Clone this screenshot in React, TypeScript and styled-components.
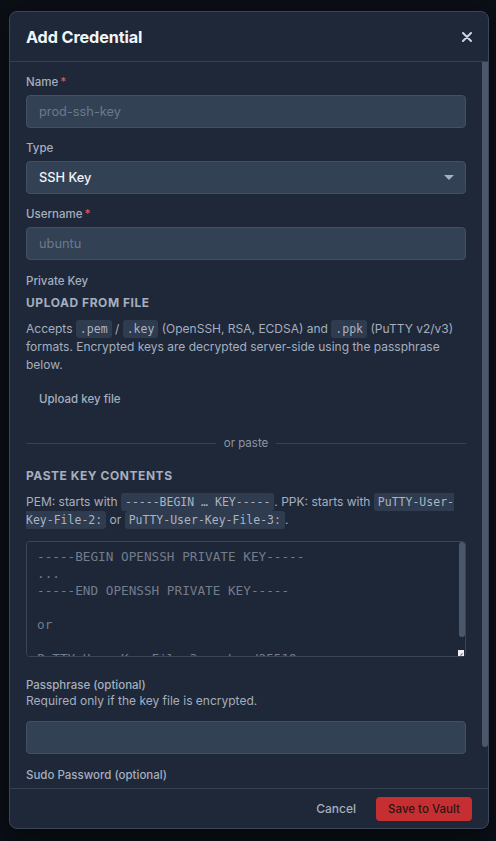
import React from "react";
import styled, { createGlobalStyle } from "styled-components";

const GlobalStyle = createGlobalStyle`
  html, body { margin: 0; padding: 0; height: 100%; }
  body {
    background: #0b0f16;
    font-family: Inter, "Noto Sans", "Liberation Sans", sans-serif;
    -webkit-font-smoothing: antialiased;
  }
  * { box-sizing: border-box; }
`;

const Overlay = styled.div`
  position: fixed;
  inset: 0;
  display: flex;
  padding: 11px 7px 12px 9px;
  background: #0b0f16;
`;

const Dialog = styled.div`
  flex: 1;
  display: flex;
  flex-direction: column;
  min-height: 0;
  background: #1f2839;
  border: 1px solid #3b4658;
  border-radius: 8px;
  overflow: hidden;
  box-shadow: 0 10px 30px rgba(0, 0, 0, 0.5);
`;

const Header = styled.div`
  height: 50px;
  flex: none;
  display: flex;
  align-items: center;
  justify-content: space-between;
  padding: 0 16px 0 16px;
  border-bottom: 1px solid #334155;
`;

const Title = styled.h2`
  margin: 0;
  font-size: 16.2px;
  font-weight: 700;
  color: #f1f5f9;
  letter-spacing: -0.1px;
`;

const CloseButton = styled.button`
  background: none;
  border: none;
  padding: 0;
  width: 18px;
  height: 18px;
  display: flex;
  align-items: center;
  justify-content: center;
  color: #cbd5e0;
  cursor: pointer;
  margin-right: -4px;
`;

const BodyWrap = styled.div`
  position: relative;
  flex: 1;
  min-height: 0;
  display: flex;
`;

const Body = styled.div`
  flex: 1;
  min-height: 0;
  overflow-y: auto;
  padding: 11px 22px 12px 16px;
  display: flex;
  flex-direction: column;
  scrollbar-width: none;
  &::-webkit-scrollbar { display: none; }
  & > * { flex-shrink: 0; }
`;

const ScrollThumb = styled.div<{ $h: number }>`
  position: absolute;
  top: 0;
  right: 0;
  width: 6px;
  height: ${(p) => p.$h}px;
  background: #4b586b;
  border-radius: 0 0 3px 3px;
`;

const Field = styled.div<{ $gap?: number }>`
  display: flex;
  flex-direction: column;
  margin-bottom: ${(p) => p.$gap ?? 11}px;
`;

const Label = styled.label<{ $tight?: boolean; $top?: number }>`
  font-size: 11.5px;
  line-height: 18px;
  font-weight: 500;
  color: #a5afbf;
  margin-top: ${(p) => p.$top ?? 0}px;
  margin-bottom: ${(p) => (p.$tight ? 0 : 4)}px;
`;

const Req = styled.span`
  color: #e05555;
  margin-left: 2px;
`;

const TextInput = styled.input`
  height: 33px;
  width: 100%;
  background: #334155;
  border: 1px solid #415066;
  border-radius: 4px;
  padding: 0 12px;
  font-family: inherit;
  font-size: 12.8px;
  color: #e2e8f0;
  outline: none;
  &::placeholder { color: #6d798b; }
`;

const SelectButton = styled.button`
  height: 33px;
  width: 100%;
  display: flex;
  align-items: center;
  justify-content: space-between;
  background: #334155;
  border: 1px solid #415066;
  border-radius: 4px;
  padding: 0 11px 0 12px;
  font-family: inherit;
  font-size: 12.8px;
  font-weight: 500;
  color: #f1f5f9;
  cursor: pointer;
`;

const SectionTitle = styled.h3<{ $top: number }>`
  margin: ${(p) => p.$top}px 0 9px 0;
  font-size: 12px;
  line-height: 16px;
  font-weight: 700;
  letter-spacing: 0.55px;
  text-transform: uppercase;
  color: #a5afbf;
`;

const Para = styled.p`
  margin: 0;
  font-size: 12px;
  line-height: 18px;
  color: #a5afbf;
`;

const Code = styled.code`
  font-family: "DejaVu Sans Mono", "Liberation Mono", monospace;
  font-size: 11.5px;
  background: #2f3b4e;
  color: #aab4c3;
  padding: 2px 4px;
  border-radius: 3px;
`;

const UploadButton = styled.button`
  align-self: flex-start;
  height: 32px;
  margin-top: 9px;
  padding: 0 13px;
  background: transparent;
  border: none;
  font-family: inherit;
  font-size: 11.5px;
  font-weight: 500;
  color: #a5afbf;
  cursor: pointer;
`;

const Divider = styled.div`
  margin-top: 19px;
  height: 18px;
  display: flex;
  align-items: center;
  gap: 8px;
  font-size: 11.5px;
  color: #8b96a7;
  &::before, &::after {
    content: "";
    flex: 1;
    height: 1px;
    background: #364255;
  }
`;

const KeyBox = styled.div`
  position: relative;
  margin-top: 12px;
  margin-bottom: 19px;
`;

const KeyArea = styled.textarea`
  display: block;
  height: 116px;
  width: 100%;
  resize: none;
  background: #1e2738;
  border: 1px solid #3a4658;
  border-radius: 4px;
  padding: 6px 16px 6px 10px;
  font-family: "DejaVu Sans Mono", "Liberation Mono", monospace;
  font-size: 12.7px;
  line-height: 17px;
  color: #737c8c;
  outline: none;
  overflow-y: auto;
  scrollbar-width: none;
  &::-webkit-scrollbar { display: none; }
`;

const AreaThumb = styled.div`
  position: absolute;
  top: 1px;
  right: 1px;
  width: 6px;
  height: 95px;
  background: #4b586b;
  border-radius: 3px;
`;

const Resizer = styled.div`
  position: absolute;
  right: 2px;
  bottom: 1px;
  width: 6px;
  height: 6px;
  background: #eef0f3;
  &::after {
    content: "";
    position: absolute;
    right: 1px;
    bottom: 1px;
    width: 3px;
    height: 1px;
    background: #6b7280;
    transform: rotate(-45deg);
  }
`;

const Hint = styled.p`
  margin: -2px 0 11px 0;
  font-size: 12px;
  line-height: 18px;
  color: #a5afbf;
`;

const Footer = styled.div`
  flex: none;
  height: 40px;
  border-top: 1px solid #334155;
  display: flex;
  align-items: center;
  justify-content: flex-end;
  gap: 9px;
  padding: 0 16px;
`;

const GhostButton = styled.button`
  height: 24px;
  padding: 0 11px;
  background: transparent;
  border: none;
  font-family: inherit;
  font-size: 12px;
  font-weight: 500;
  color: #a5afbf;
  cursor: pointer;
`;

const DangerButton = styled.button`
  height: 24px;
  width: 96px;
  padding: 0;
  background: #c62f32;
  border: none;
  border-radius: 4px;
  font-family: inherit;
  font-size: 11.5px;
  font-weight: 500;
  color: #2c1416;
  cursor: pointer;
`;

const sampleKey = `-----BEGIN OPENSSH PRIVATE KEY-----
...
-----END OPENSSH PRIVATE KEY-----

or

PuTTY-User-Key-File-3: ssh-ed25519
Encryption: none
Comment: ...`;

export default function App() {
  return (
    <>
      <GlobalStyle />
      <Overlay>
        <Dialog role="dialog">
          <Header>
            <Title>Add Credential</Title>
            <CloseButton aria-label="Close">
              <svg width="10" height="10" viewBox="0 0 10 10">
                <path d="M1 1 L9 9 M9 1 L1 9" stroke="currentColor" strokeWidth="2" strokeLinecap="round" />
              </svg>
            </CloseButton>
          </Header>
          <BodyWrap>
            <Body>
              <Field>
                <Label>
                  Name<Req>*</Req>
                </Label>
                <TextInput placeholder="prod-ssh-key" />
              </Field>
              <Field>
                <Label>Type</Label>
                <SelectButton>
                  <span>SSH Key</span>
                  <svg width="10" height="6" viewBox="0 0 10 6">
                    <path d="M0 0 H10 L5 5 Z" fill="#a5afbf" />
                  </svg>
                </SelectButton>
              </Field>
              <Field>
                <Label>
                  Username<Req>*</Req>
                </Label>
                <TextInput placeholder="ubuntu" />
              </Field>
              <Label $tight $top={1}>Private Key</Label>
              <SectionTitle $top={5}>Upload from file</SectionTitle>
              <Para>
                Accepts <Code>.pem</Code> / <Code>.key</Code> (OpenSSH, RSA, ECDSA) and <Code>.ppk</Code> (PuTTY v2/v3)
                formats. Encrypted keys are decrypted server-side using the passphrase below.
              </Para>
              <UploadButton>Upload key file</UploadButton>
              <Divider>or paste</Divider>
              <SectionTitle $top={16}>Paste key contents</SectionTitle>
              <Para>
                PEM: starts with <Code>-----BEGIN … KEY-----</Code>. PPK: starts with <Code>PuTTY-User-Key-File-2:</Code>{" "}
                or <Code>PuTTY-User-Key-File-3:</Code>.
              </Para>
              <KeyBox>
                <KeyArea defaultValue={sampleKey} spellCheck={false} />
                <AreaThumb />
                <Resizer />
              </KeyBox>
              <Label $tight>Passphrase (optional)</Label>
              <Hint>Required only if the key file is encrypted.</Hint>
              <Field $gap={12}>
                <TextInput type="password" />
              </Field>
              <Field $gap={0}>
                <Label>Sudo Password (optional)</Label>
                <TextInput type="password" />
              </Field>
            </Body>
            <ScrollThumb $h={685} />
          </BodyWrap>
          <Footer>
            <GhostButton>Cancel</GhostButton>
            <DangerButton>Save to Vault</DangerButton>
          </Footer>
        </Dialog>
      </Overlay>
    </>
  );
}
